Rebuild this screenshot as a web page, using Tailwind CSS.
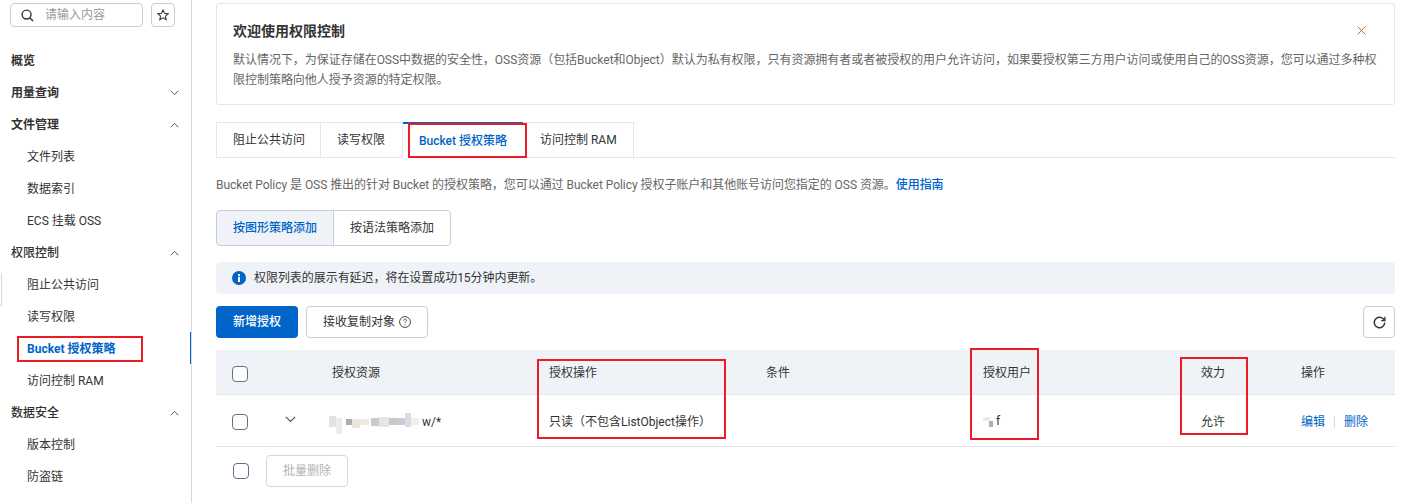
<!DOCTYPE html>
<html lang="zh-CN">
  <head>
    <meta charset="UTF-8" />
    <title>权限控制</title>
    <script src="https://cdn.jsdelivr.net/npm/@tailwindcss/browser@4"></script>
  </head>
  <body class="bg-white font-['Roboto','Noto_Sans_CJK_SC',sans-serif] text-xs text-[#333]">
    <div class="relative flex w-[1404px] h-[503px] overflow-hidden">
      <!-- sidebar -->
      <aside class="relative w-[192px] h-full shrink-0 border-r border-[#d5d9df]">
        <div class="flex gap-2 pl-[10px] pt-[3px]">
          <div class="flex items-center w-[133px] h-6 border border-[#c9ced6] rounded-sm pl-[10px]">
            <svg class="w-[13px] h-[13px] text-[#333]" viewBox="0 0 14 14" fill="none" stroke="currentColor" stroke-width="1.5"><circle cx="6" cy="6" r="4.8"/><path d="M9.6 9.6 13 13"/></svg>
            <span class="ml-[11px] text-[#999]">请输入内容</span>
          </div>
          <div class="flex items-center justify-center w-6 h-6 border border-[#c9ced6] rounded-sm">
            <svg class="w-3 h-3 text-[#333]" viewBox="0 0 14 14" fill="none" stroke="currentColor" stroke-width="1.2"><path d="M7 1.2 8.8 5l4.2.5-3.1 2.8.8 4.2L7 10.4 3.3 12.5l.8-4.2L1 5.500 5.200 5z"/></svg>
          </div>
        </div>
        <nav class="mt-[18px] pr-3">
          <div class="flex items-center h-8 pl-[11px] font-bold">概览</div>
          <div class="flex items-center justify-between h-8 pl-[11px] font-bold">用量查询
            <svg class="w-[9px] h-[6px] text-[#555]" viewBox="0 0 9 6" fill="none" stroke="currentColor"><path d="m.7.8 3.800 3.800L8.300.8"/></svg>
          </div>
          <div class="flex items-center justify-between h-8 pl-[11px] font-bold">文件管理
            <svg class="w-[9px] h-[6px] text-[#555]" viewBox="0 0 9 6" fill="none" stroke="currentColor"><path d="m.7 5.200 3.800-3.800 3.800 3.800"/></svg>
          </div>
          <div class="flex items-center h-8 pl-[27px]">文件列表</div>
          <div class="flex items-center h-8 pl-[27px]">数据索引</div>
          <div class="flex items-center h-8 pl-[27px]">ECS 挂载 OSS</div>
          <div class="flex items-center justify-between h-8 pl-[11px] font-medium">权限控制
            <svg class="w-[9px] h-[6px] text-[#555]" viewBox="0 0 9 6" fill="none" stroke="currentColor"><path d="m.7 5.200 3.800-3.800 3.800 3.800"/></svg>
          </div>
          <div class="flex items-center h-8 pl-[27px]">阻止公共访问</div>
          <div class="flex items-center h-8 pl-[27px]">读写权限</div>
          <div class="flex items-center h-8 pl-[27px] font-bold text-[#0064c8]">Bucket 授权策略</div>
          <div class="flex items-center h-8 pl-[27px]">访问控制 RAM</div>
          <div class="flex items-center justify-between h-8 pl-[11px] font-medium">数据安全
            <svg class="w-[9px] h-[6px] text-[#555]" viewBox="0 0 9 6" fill="none" stroke="currentColor"><path d="m.7 5.200 3.800-3.800 3.800 3.800"/></svg>
          </div>
          <div class="flex items-center h-8 pl-[27px]">版本控制</div>
          <div class="flex items-center h-8 pl-[27px]">防盗链</div>
        </nav>
        <div class="absolute right-0 top-[332px] w-px h-8 bg-[#0064c8]"></div>
        <div class="absolute left-0 top-[273px] w-[2px] h-[33px] border-r border-b border-[#d5d9df]"></div>
      </aside>

      <!-- main -->
      <main class="flex-1 pl-6 pr-[9px] pt-[3px]">
        <div class="relative h-[102px] border border-[#e3e5e9] rounded-[3px] pl-4 pt-[17px]">
          <h2 class="text-sm leading-5 font-bold">欢迎使用权限控制</h2>
          <p class="mt-[9px] leading-5 text-[#666] tracking-[-0.03px]">默认情况下，为保证存储在OSS中数据的安全性，OSS资源（包括Bucket和Object）默认为私有权限，只有资源拥有者或者被授权的用户允许访问，如果要授权第三方用户访问或使用自己的OSS资源，您可以通过多种权<br />限控制策略向他人授予资源的特定权限。</p>
          <svg class="absolute right-[28px] top-[22px] w-[9px] h-[9px] text-[#c86a20]" viewBox="0 0 9 9" fill="none" stroke="currentColor"><path d="m.5.5 8 8M8.500.5l-8 8"/></svg>
        </div>

        <div class="flex h-[36px] mt-[17px] border-b border-[#e3e5e9]">
          <div class="flex items-center w-[105px] h-[36px] pl-4 border border-[#e3e5e9]">阻止公共访问</div>
          <div class="flex items-center w-[82px] h-[36px] pl-4 border-y border-r border-[#e3e5e9]">读写权限</div>
          <div class="flex items-center justify-center w-[120px] h-[36px] bg-white border-t-2 border-[#0064c8] font-medium text-[#0064c8] z-10">Bucket 授权策略</div>
          <div class="flex items-center w-[111px] h-[36px] pl-[17px] border-y border-r border-[#e3e5e9]">访问控制 RAM</div>
        </div>

        <p class="mt-[17px] leading-5 text-[#666] tracking-[-0.05px]">Bucket Policy 是 OSS 推出的针对 Bucket 的授权策略，您可以通过 Bucket Policy 授权子账户和其他账号访问您指定的 OSS 资源。<span class="text-[#0064c8] font-medium">使用指南</span></p>

        <div class="flex mt-[15px] h-9">
          <div class="flex items-center justify-center w-[118px] border border-[#c9ced6] rounded-l-sm bg-[#eff3f8] font-medium text-[#0064c8]">按图形策略添加</div>
          <div class="flex items-center justify-center w-[118px] -ml-px border border-[#c9ced6] rounded-r-sm">按语法策略添加</div>
        </div>

        <div class="flex items-center h-8 mt-4 pl-4 bg-[#eff3f8] rounded-sm">
          <svg class="w-[14px] h-[14px] text-[#0064c8]" viewBox="0 0 14 14"><circle cx="7" cy="7" r="7" fill="currentColor"/><rect x="6" y="5.800" width="2" height="5.200" fill="#fff"/><rect x="6" y="3" width="2" height="1.900" fill="#fff"/></svg>
          <span class="ml-2 tracking-[-0.05px]">权限列表的展示有延迟，将在设置成功15分钟内更新。</span>
        </div>

        <div class="flex items-center justify-between mt-3 h-8">
          <div class="flex gap-2">
            <div class="flex items-center justify-center w-[82px] h-8 rounded-sm bg-[#0064c8] text-white font-medium">新增授权</div>
            <div class="flex items-center justify-center gap-1 w-[122px] h-8 border border-[#c9ced6] rounded-sm">接收复制对象
              <svg class="w-3 h-3 text-[#444]" viewBox="0 0 12 12" fill="none" stroke="currentColor" stroke-width="1"><circle cx="6" cy="6" r="5.400"/><path d="M4.500 4.700c0-2 3-2 3-.2 0 1.100-1.500 1.100-1.500 2.500M6 8.200v1"/></svg>
            </div>
          </div>
          <div class="flex items-center justify-center w-8 h-8 border border-[#c9ced6] rounded-sm">
            <svg class="w-[13px] h-[13px] text-[#333]" viewBox="0 0 12 12" fill="none" stroke="currentColor" stroke-width="1.400"><path d="M10.800 6a4.800 4.800 0 1 1-1.400-3.400L10.800 4"/><path d="M11 .8V4.200H7.600" stroke-width="1.200"/></svg>
          </div>
        </div>

        <div class="grid grid-cols-[116px_217px_217px_217px_218px_100px_1fr] items-center h-[45px] pt-[2px] mt-3 bg-[#eff3f8] border-b border-[#e3e5e9]">
          <div class="pl-4"><div class="w-4 h-4 mt-[2px] bg-white border border-[#5f7186] rounded-sm"></div></div>
          <div>授权资源</div>
          <div>授权操作</div>
          <div>条件</div>
          <div>授权用户</div>
          <div>效力</div>
          <div>操作</div>
        </div>
        <div class="grid grid-cols-[116px_217px_217px_217px_218px_100px_1fr] items-center h-[52px] pt-[2px] border-b border-[#e3e5e9]">
          <div class="flex items-center pl-4">
            <div class="w-4 h-4 border border-[#5f7186] rounded-sm"></div>
            <svg class="ml-[37px] -mt-[4px] w-[11px] h-[7px] text-[#555]" viewBox="0 0 11 7" fill="none" stroke="currentColor" stroke-width="1.200"><path d="m.8.8 4.700 4.700L10.200.8"/></svg>
          </div>
          <div class="flex items-center -ml-[3px]">
            <span class="flex items-center h-5">
              <span class="w-[7px] h-[11px] bg-[#e2e2e2]"></span>
              <span class="w-[6px] h-4 bg-[#ececec] mt-2"></span>
              <span class="w-[6px] h-[6px] ml-[4px] bg-[#a9aeb6]"></span>
              <span class="w-2 h-[9px] bg-[#e9e6e0] mt-1"></span>
              <span class="w-[9px] h-[6px] bg-[#f1e9e0]"></span>
              <span class="w-[8px] h-[8px] bg-[#cfc9c9] ml-[2px]"></span>
              <span class="w-[10px] h-[10px] bg-[#e5e5e5]"></span>
              <span class="w-[8px] h-[7px] bg-[#c3cbc6]"></span>
              <span class="w-[8px] h-[7px] bg-[#cdc8de]"></span>
              <span class="w-[6px] h-[14px] bg-[#dcdcdc] -mt-1"></span>
              <span class="w-2 h-[7px] bg-[#efefef]"></span>
            </span>
            <span class="ml-[3px]">w/*</span>
          </div>
          <div>只读（不包含ListObject操作）</div>
          <div></div>
          <div class="flex items-center"><span class="w-[7px] h-1 bg-[#f5e8e0] -mt-[6px]"></span><span class="w-1 h-[6px] bg-[#aeb0b2] mt-[5px] -ml-px"></span><span class="ml-[3px] leading-none -mt-[2px]">f</span></div>
          <div>允许</div>
          <div class="flex items-center text-[#0064c8]">编辑<span class="w-px h-3 mx-[9px] bg-[#d5d9df]"></span>删除</div>
        </div>
        <div class="flex items-center h-[48px] pl-[17px]">
          <div class="w-4 h-4 border border-[#5f7186] rounded-sm"></div>
          <div class="flex items-center justify-center w-[82px] h-8 ml-[17px] border border-[#d5d9df] rounded-sm text-[#b3b3b3]">批量删除</div>
        </div>
      </main>

      <!-- red annotation boxes drawn over the screenshot -->
      <div class="absolute left-[17px] top-[336px] w-[126px] h-[26px] border-2 border-[#ed1c24]"></div>
      <div class="absolute left-[408px] top-[123px] w-[119px] h-[35px] border-2 border-[#ed1c24] z-20"></div>
      <div class="absolute left-[537px] top-[359px] w-[189px] h-[80px] border-2 border-[#ed1c24]"></div>
      <div class="absolute left-[970px] top-[348px] w-[69px] h-[92px] border-2 border-[#ed1c24]"></div>
      <div class="absolute left-[1180px] top-[357px] w-[68px] h-[78px] border-2 border-[#ed1c24]"></div>
    </div>
  </body>
</html>
